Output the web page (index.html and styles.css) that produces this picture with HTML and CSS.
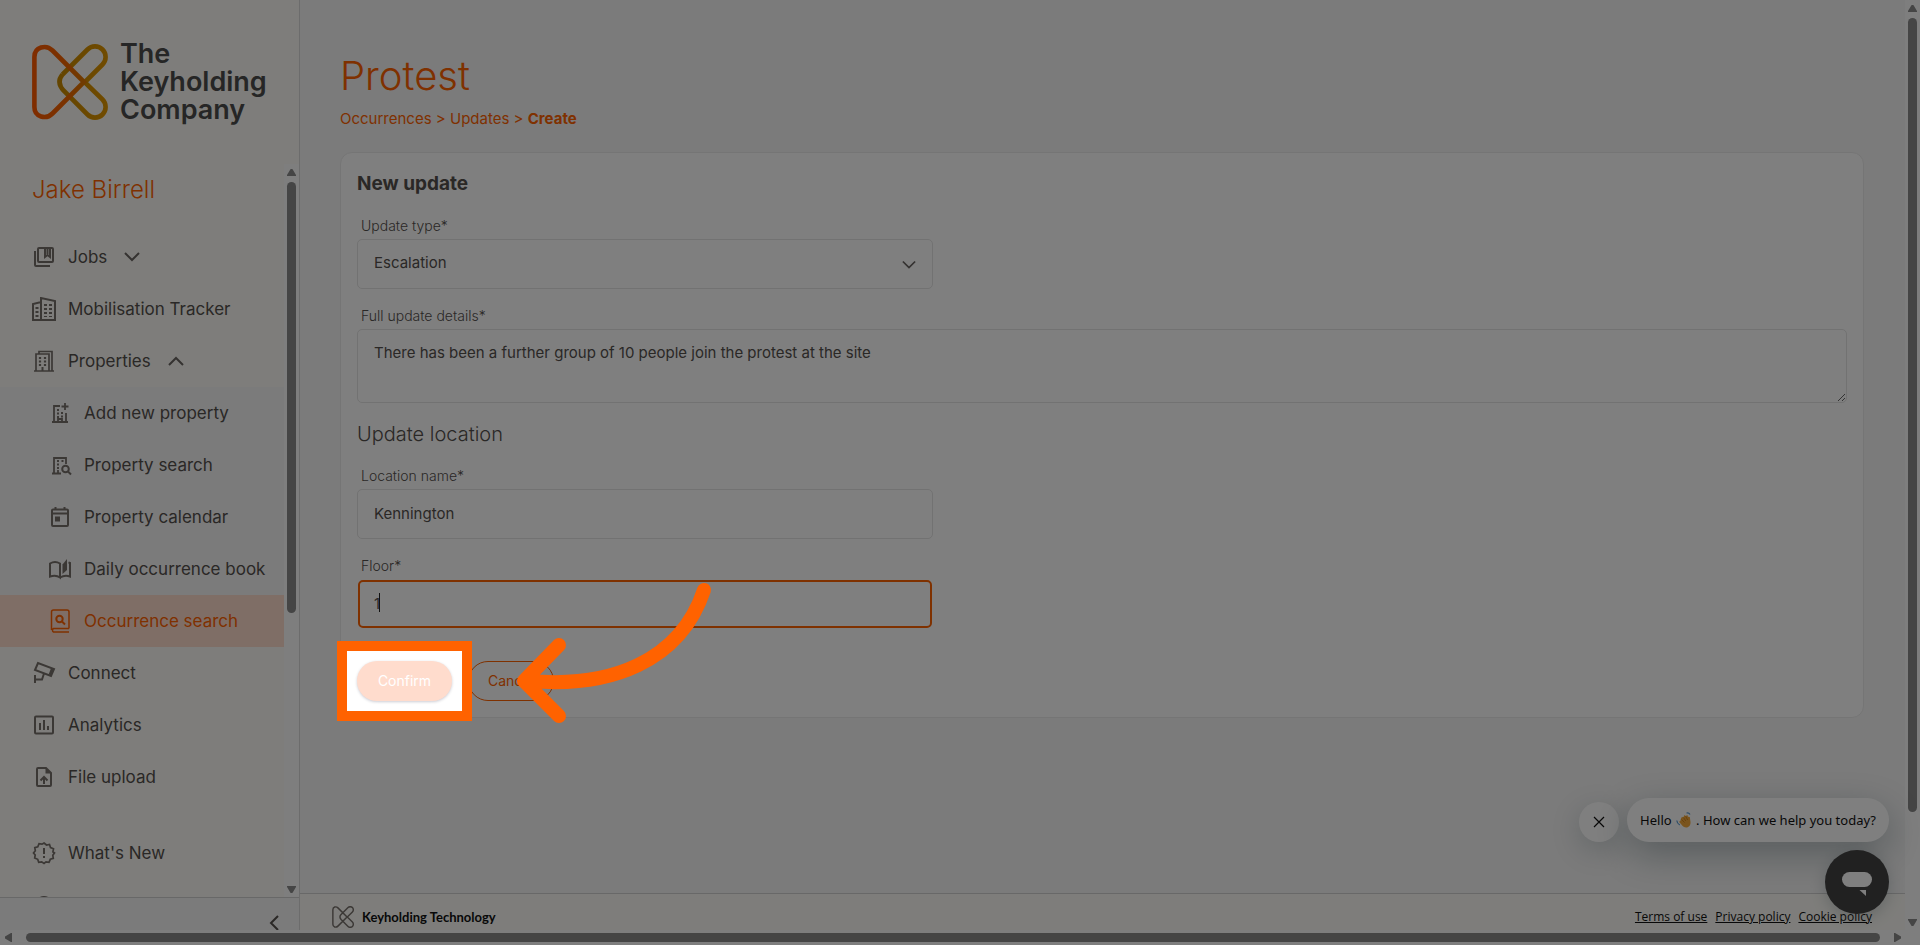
FILE: index.html
```html
<!DOCTYPE html>
<html lang="en">
<head>
<meta charset="utf-8">
<title>Protest - New update</title>
<link rel="stylesheet" href="styles.css">
</head>
<body>
<div class="window">
  <div class="app">
    <aside class="sidebar">
      <a class="brand" href="#">
        <svg class="brand-mark" viewBox="0 0 76 76" fill="none" stroke-width="4.6">
          <defs>
            <linearGradient id="red" x1="0" y1="0" x2="1" y2="0"><stop offset="0" stop-color="#ff5a00"/><stop offset=".6" stop-color="#f56400"/><stop offset="1" stop-color="#e07800"/></linearGradient>
            <linearGradient id="gold" x1="0" y1="0" x2="1" y2="0"><stop offset="0" stop-color="#c98a00"/><stop offset="1" stop-color="#e09600"/></linearGradient>
          </defs>
          <path stroke="url(#gold)" d="M30.500 30.500 55.500 5.500A10.300 10.300 0 0 1 70.500 20.500L52 39M52 37.500 70.500 55.500A10.300 10.300 0 0 1 55.500 70.500L31.500 46.500Q24 38 30.500 30.500"/>
          <path stroke="url(#red)" d="M52 38 20.500 6.500C14 0 2.400 3 2.400 13V63C2.400 73 14 76 20.500 69.500Z"/>
        </svg>
        <span class="brand-name">The<br>Keyholding<br>Company</span>
      </a>
      <div class="side-scroll">
        <div class="side-content">
          <p class="user">Jake Birrell</p>
          <nav>
            <ul class="menu">
              <li><a href="#"><svg class="ico" viewBox="0 0 24 24"><path d="M7 3h13q1 0 1 1v12q0 1-1 1H7q-1 0-1-1V4q0-1 1-1zM3 6v14q0 1 1 1h14"/><path d="M13 3v9l2.500-2 2.500 2V3M15.500 4v5"/></svg><span>Jobs</span><svg class="chev" viewBox="0 0 16 10"><path d="M1 1l7 7 7-7"/></svg></a></li>
              <li><a href="#"><svg class="ico" viewBox="0 0 24 24"><path d="M1 23V7l8-2v18zM9 23V1l14 3v19z"/><path stroke-dasharray="2 2" d="M5 10v11M13.500 7v13M18.500 7v13" stroke-width="3"/></svg><span>Mobilisation Tracker</span></a></li>
              <li><a href="#"><svg class="ico" viewBox="0 0 24 24"><path d="M2 22h20M4 22V5h13v17M7 5V2.500h13V22" stroke-width="1.700"/><path stroke-dasharray="2 1.500" d="M8 8v9M13 8v9" stroke-width="2.200"/><path d="M10.500 18v4"/></svg><span>Properties</span><svg class="chev" viewBox="0 0 16 10"><path d="M1 9l7-7 7 7"/></svg></a>
                <ul class="submenu">
                  <li><a href="#"><svg class="ico" viewBox="0 0 24 24"><path d="M4 21h16M6 21V5h6M18 21v-9M10 21v-3h4v3M17 2v7M13.500 5.500h7" stroke-width="1.800"/><path stroke-dasharray="2 1.500" d="M10 8v9M14 11v6" stroke-width="2"/></svg><span>Add new property</span></a></li>
                  <li><a href="#"><svg class="ico" viewBox="0 0 24 24"><path d="M4 20.500h9M6 20V5h12v6M10 20v-3" stroke-width="1.800"/><path stroke-dasharray="2 1.500" d="M10 7v9M14.500 7v3" stroke-width="2"/><circle cx="17.500" cy="16" r="3.300"/><path d="M20 18.500l3 3"/></svg><span>Property search</span></a></li>
                  <li><a href="#"><svg class="ico" viewBox="0 0 24 24"><path d="M5 4.500h14q1 0 1 1V20q0 1-1 1H5q-1 0-1-1V5.500q0-1 1-1zM4 8.500h16M7.500 2v3M16.500 2v3"/><path class="solid" d="M7 11.500h5v5H7z"/></svg><span>Property calendar</span></a></li>
                  <li><a href="#"><svg class="ico" viewBox="0 0 24 24"><path d="M12 20.500Q8 17.500 2 19.500V6.500Q7 3.500 12 6.500zQ17 17.500 22 19.500V6l-1.500-.7"/><path class="solid" d="M14.500 7.500L19 2v11l-4.500 4z"/></svg><span>Daily occurrence book</span></a></li>
                  <li><a class="active" href="#"><svg class="ico" viewBox="0 0 24 24"><path d="M21 19.500H5.500a2 2 0 0 0 0 3.500H21M3.500 21V3Q3.500.900 5.500.900h13.500q2 0 2 2v16.500" stroke-width="1.500"/><circle cx="11.500" cy="10" r="3.200"/><path d="M14 12.500l3 3"/></svg><span>Occurrence search</span></a></li>
                </ul>
              </li>
              <li><a href="#"><svg class="ico" viewBox="0 0 24 24"><path d="M3 9l3-7 16 6-3 7zM3 14v8M3 18.500h7l2-6"/><path d="M20.500 7.500l-2.500 6.500" stroke-width="3"/></svg><span>Connect</span></a></li>
              <li><a href="#"><svg class="ico" viewBox="0 0 24 24"><path d="M4 3.500h16q1 0 1 1v15q0 1-1 1H4q-1 0-1-1v-15q0-1 1-1zM8 10v7M12 7v10M16 13v4"/></svg><span>Analytics</span></a></li>
              <li><a href="#"><svg class="ico" viewBox="0 0 24 24"><path d="M14 3H6q-1 0-1 1v16q0 1 1 1h12q1 0 1-1V8zM12 19v-6M8.500 15.500L12 12l3.500 3.500"/><path class="solid" d="M13.500 2.500v6h6z"/></svg><span>File upload</span></a></li>
              <li class="later"><a href="#"><svg class="ico" viewBox="0 0 24 24"><path d="M12 2l2.500 2 3-.500 1 3 3 1.300-.600 3L22.500 12l-1.700 2.300.500 3-3 1-1.300 3-3-.500L12 22.500l-2.300-1.700-3 .500-1-3-3-1.300.500-3L1.500 12l1.800-2.300-.500-3 3-1 1.200-3 3 .500z" stroke-width="1.700"/><path d="M12 7v6M12 15v2"/></svg><span>What's New</span></a></li>
              <li><a href="#" aria-label="Help"><svg class="ico" viewBox="0 0 24 24"><circle cx="12" cy="12" r="8"/></svg></a></li>
            </ul>
          </nav>
        </div>
        <div class="bar bar-v"><i class="up"></i><b class="thumb side-thumb"></b><i class="down"></i></div>
      </div>
      <div class="side-foot">
        <button class="collapse" type="button" aria-label="Collapse menu"><svg viewBox="0 0 10 16"><path d="M9 1L2 8l7 7"/></svg></button>
      </div>
    </aside>
    <main class="page">
      <div class="content">
        <h1>Protest</h1>
        <p class="crumbs"><a href="#">Occurrences</a> &gt; <a href="#">Updates</a> &gt; <strong>Create</strong></p>
        <form class="card">
          <h2>New update</h2>
          <div class="field short">
            <label for="type">Update type*</label>
            <div class="select">
              <select id="type"><option>Escalation</option></select>
              <svg class="chev" viewBox="0 0 16 10"><path d="M1 1l7 7 7-7"/></svg>
            </div>
          </div>
          <div class="field">
            <label for="details">Full update details*</label>
            <textarea id="details">There has been a further group of 10 people join the protest at the site</textarea>
          </div>
          <h3>Update location</h3>
          <div class="field short">
            <label for="loc">Location name*</label>
            <input id="loc" type="text" value="Kennington">
          </div>
          <div class="field short">
            <label for="floor">Floor*</label>
            <div class="focus-box"><input id="floor" class="focused" type="text" value="1"><span class="caret"></span></div>
          </div>
          <div class="actions">
            <div class="spot-wrap">
              <button class="btn primary" type="button">Confirm</button>
              <div class="spot"></div>
              <svg class="arrow" viewBox="0 0 210 150"><path d="M194 12C170 84 100 110 20 103M49 67L14 103L49 138"/></svg>
            </div>
            <button class="btn ghost" type="button">Cancel</button>
          </div>
        </form>
      </div>
      <footer class="foot">
        <svg class="foot-mark" viewBox="0 0 76 76"><path d="M30.500 30.500 55.500 5.500A10.300 10.300 0 0 1 70.500 20.500L52 39M52 37.500 70.500 55.500A10.300 10.300 0 0 1 55.500 70.500L31.500 46.500Q24 38 30.500 30.500M52 38 20.500 6.500C14 0 3 3 3 13V63C3 73 14 76 20.500 69.500Z"/></svg>
        <strong>Keyholding Technology</strong>
        <span class="links"><a href="#">Terms of use</a><a href="#">Privacy policy</a><a href="#">Cookie policy</a></span>
      </footer>
    </main>
    <div class="chat">
      <div class="chat-row">
        <button class="chat-close" type="button" aria-label="Close"><svg viewBox="0 0 12 12"><path d="M1 1l10 10M11 1L1 11"/></svg></button>
        <div class="bubble">Hello <svg class="wave" viewBox="0 0 16 16"><path d="M5 6.500l1-1.800 1.300.8L8.500 3l1.300 1 1.500-1 .7 1.800 1.800.2.700 5c.300 3-1.500 5.500-4.300 5.500-2 0-3.400-.900-4.400-2.500L3 9.800 4.300 9z" fill="#f5a93a"/><path d="M7.500 5.500l2.300 3.500M9.700 4.300l2 3.700M5.500 7.500l3 3" stroke="#d08420" fill="none"/><path d="M10.500 1q2.500-.500 3.500 1.500M.800 8.500q.200 3 3 4.500" stroke="#5b9bd0" stroke-width="1.200" fill="none"/></svg>. How can we help you today?</div>
      </div>
      <button class="launcher" type="button" aria-label="Open chat"><svg viewBox="0 0 30 24"><rect width="30" height="15" rx="7.500"/><path d="M17.500 18H24v6z"/></svg></button>
    </div>
  </div>
  <div class="bar bar-v win-v"><i class="up"></i><b class="thumb win-thumb"></b><i class="down"></i></div>
  <div class="bar bar-h"><i class="left"></i><b class="thumb"></b><i class="right"></i></div>
</div>
</body>
</html>
```
FILE: styles.css
```css
:root {
  --orange: #ff6200;
  --ink: #55504d;
  --line: #e4e4e4;
  --cream: #fcfbf6;
  --grey: #f6f6f6;
}
* { box-sizing: border-box; }
body { margin: 0; font: 400 15px/24px Inter, sans-serif; color: var(--ink); background: var(--grey); }
a { color: inherit; text-decoration: none; }
ul { list-style: none; margin: 0; padding: 0; }
h1, h2, h3, p { margin: 0; }
button, input, textarea, select { font: inherit; color: inherit; }
svg { display: block; fill: none; stroke: currentColor; }

.window { height: 100vh; display: grid; grid-template: 1fr 15px / 1fr 15px; overflow: hidden; }
.app { position: relative; display: flex; min-height: 0; }

.sidebar { width: 300px; flex: none; display: flex; flex-direction: column; min-height: 0; background: var(--cream); border-right: 1px solid #d8d8d8; }
.brand { display: flex; gap: 12px; padding: 44px 0 44px 32px; }
.brand-mark { width: 76px; height: 76px; stroke: none; }
.brand-name { font-size: 27px; line-height: 28px; font-weight: 600; color: #4c4c4c; margin: -4px 0; }
.side-scroll { flex: 1; min-height: 0; display: flex; overflow: hidden; }
.side-content { flex: 1; min-width: 0; overflow: hidden; }
.user { padding: 10px 0 25px 32px; font-size: 24px; line-height: 32px; font-weight: 300; color: var(--orange); }
.menu a { display: flex; align-items: center; height: 52px; padding-left: 32px; gap: 12px; font-size: 17px; white-space: nowrap; }
.ico { width: 24px; height: 24px; flex: none; color: #77706b; stroke-width: 2; }
.ico .solid { fill: currentColor; stroke: none; }
.chev { width: 16px; height: 10px; stroke-width: 2; color: #6a6562; }
.menu a .chev { margin-left: 5px; }
.submenu { background: var(--grey); }
.submenu a { padding-left: 48px; }
.menu .active { background: #ffdccd; color: var(--orange); }
.active .ico { color: var(--orange); }
.later { margin-top: 24px; }
.side-foot { height: 33px; flex: none; border-top: 1px solid #d0d0d0; background: var(--grey); display: flex; justify-content: flex-end; overflow: hidden; }
.collapse { border: 0; background: none; padding: 17px 20px 0 0; }
.collapse svg { width: 10px; height: 16px; stroke-width: 2; }

.bar { display: flex; align-items: center; background: #fdfdfd; }
.bar-v { flex-direction: column; width: 15px; padding: 5px 0 4px; }
.bar-h { grid-column: 1 / 3; height: 15px; padding: 0 19px 0 5px; }
.thumb { background: #8a8a8a; border-radius: 5px; }
.bar-v .thumb { width: 9px; margin-top: 6px; }
.bar-h .thumb { height: 9px; flex: 1; margin: 0 14px; }
.side-thumb { height: 59.5%; }
.win-thumb { height: 86.2%; }
.bar i { width: 9px; height: 7px; background: #8a8a8a; }
.up { clip-path: polygon(40% 0, 60% 0, 100% 85%, 100% 100%, 0 100%, 0 85%); }
.down { clip-path: polygon(0 0, 100% 0, 100% 15%, 60% 100%, 40% 100%, 0 15%); margin-top: auto; }
.bar .left, .bar .right { width: 7px; height: 9px; }
.left { clip-path: polygon(0 40%, 85% 0, 100% 0, 100% 100%, 85% 100%, 0 60%); }
.right { clip-path: polygon(0 0, 15% 0, 100% 40%, 100% 60%, 15% 100%, 0 100%); }

.page { flex: 1; min-width: 0; display: flex; flex-direction: column; }
.content { flex: 1; padding: 52px 41px 0 40px; }
h1 { font-size: 40px; line-height: 48px; font-weight: 300; color: var(--orange); }
.crumbs { margin: 7px 0 21px; color: var(--orange); }
.crumbs strong { font-weight: 700; }
.card { background: #fff; border: 1px solid #ebebeb; border-radius: 12px; padding: 17px 16px 16px; }
h2 { font-size: 19px; line-height: 28px; font-weight: 700; }
h3 { font-size: 20px; line-height: 28px; font-weight: 300; margin: 17px 0 18px; }
.field { margin-top: 17px; }
h2 + .field { margin-top: 18px; }
h3 + .field { margin-top: 0; }
.field.short { max-width: 576px; }
.field label { display: block; width: fit-content; padding-left: 4px; font-size: 14px; font-weight: 300; line-height: 20px; margin-bottom: 3px; }
.field input, .field select, .field textarea { display: block; width: 100%; height: 50px; border: 1px solid var(--line); border-radius: 5px; background: #fff; padding: 0 16px 2px; appearance: none; outline: 0; }
.field textarea { height: 74px; padding: 11px 16px; resize: vertical; }
.select, .focus-box { position: relative; }
.select .chev { position: absolute; right: 17px; top: 21px; width: 14px; height: 10px; pointer-events: none; }
.focus-box { padding: 1px; }
.field .focused { height: 48px; border: 2px solid var(--orange); padding-left: 14px; }
.caret { position: absolute; left: 22px; top: 14px; width: 1px; height: 19px; background: #222; }
.actions { display: flex; gap: 16px; margin-top: 32px; }
.spot-wrap { position: relative; }
.btn { display: block; height: 40px; border-radius: 20px; font-size: 14px; padding: 0 20px; }
.primary { width: 95px; border: 0; background: #ffdccd; color: #fff; box-shadow: 0 1px 3px rgba(0, 0, 40, .2); }
.ghost { width: 86px; border: 1px solid var(--orange); background: none; color: var(--orange); padding: 0 19px; text-align: left; }
.spot { position: absolute; z-index: 20; inset: -10px; box-shadow: 0 0 0 10px var(--orange), 0 0 0 3000px rgba(0, 0, 0, .5); pointer-events: none; }
.arrow { position: absolute; z-index: 21; left: 153px; top: -83px; width: 210px; height: 150px; stroke: var(--orange); stroke-width: 14; stroke-linecap: round; stroke-linejoin: round; pointer-events: none; }

.foot { display: flex; align-items: center; height: 37px; padding: 10px 33px 0 32px; border-top: 1px solid #d0d0d0; background: var(--cream); font: 400 12px/16px "Open Sans", sans-serif; color: #111; }
.foot strong { font: 700 13px/16px Lato, sans-serif; }
.foot-mark { width: 22px; height: 22px; margin-right: 8px; color: #77706b; stroke-width: 5; }
.links { display: flex; gap: 8px; margin-left: auto; }
.links a { text-decoration: underline; }

.chat { position: absolute; z-index: 5; right: 16px; bottom: 16px; display: flex; flex-direction: column; align-items: flex-end; gap: 8px; }
.chat-row { display: flex; align-items: flex-end; gap: 8px; }
.chat-close { width: 40px; height: 40px; border: 0; border-radius: 50%; background: #fff; padding: 14px; color: #111; box-shadow: 0 8px 30px rgba(10, 40, 50, .2); }
.chat-close svg { width: 12px; height: 12px; stroke-width: 1.2; }
.bubble { display: flex; align-items: center; white-space: pre; height: 44px; padding: 0 13px; border-radius: 22px; background: #fff; color: #111; font: 400 13px/20px "Noto Sans", sans-serif; box-shadow: 0 12px 36px rgba(10, 40, 50, .3); }
.wave { width: 16px; height: 16px; margin: 0 4px 0 1px; stroke: none; }
.launcher { width: 64px; height: 64px; border: 0; border-radius: 50%; background: #424242; padding: 22px 17px 18px; box-shadow: 0 4px 16px rgba(10, 40, 50, .2); }
.launcher svg { width: 30px; height: 24px; fill: #fff; stroke: none; }
```
